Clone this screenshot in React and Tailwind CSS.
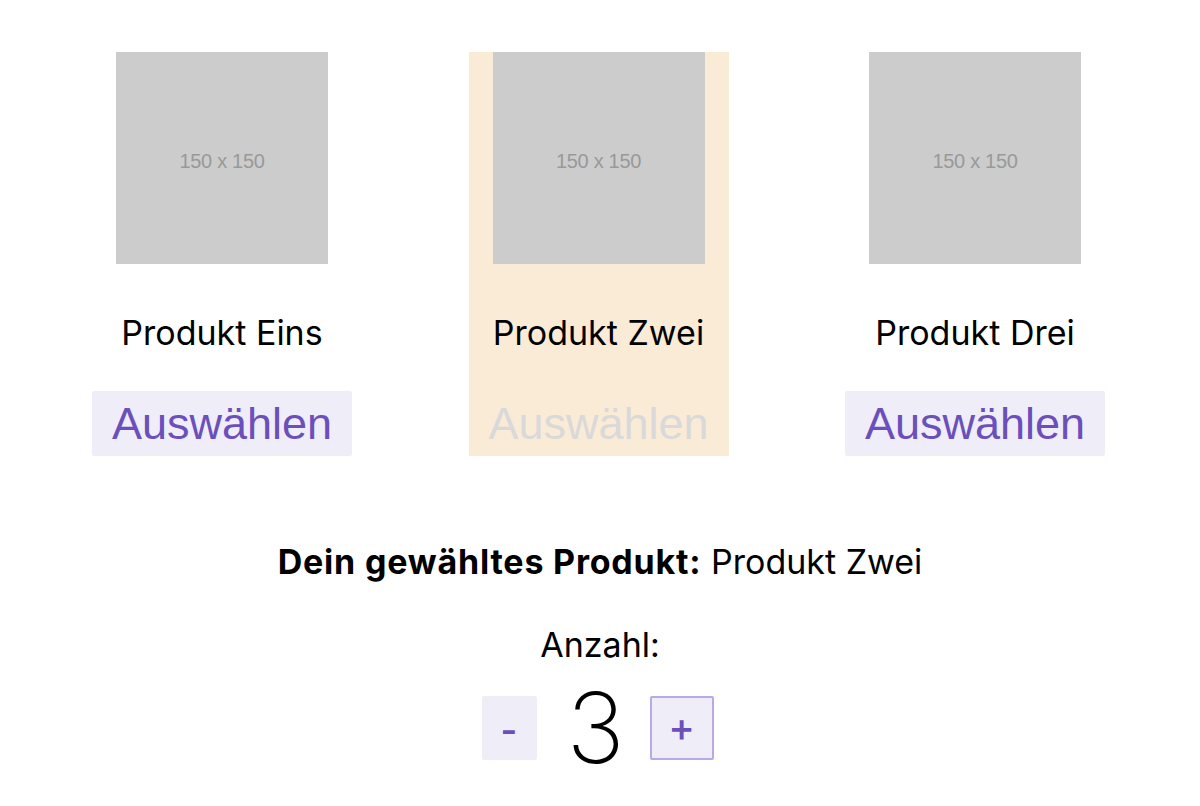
import React, { useState } from "react";

const products = ["Produkt Eins", "Produkt Zwei", "Produkt Drei"];

function Card({ name, selected, onSelect }) {
  return (
    <div
      className={
        "flex w-[260px] flex-col items-center " +
        (selected ? "bg-[#faebd7]" : "")
      }
    >
      <div className="flex h-[212px] w-[212px] items-center justify-center bg-[#cccccc] pt-[6px]">
        <span className="font-['Liberation_Sans',sans-serif] text-[20px] tracking-[-0.3px] text-[#999999]">
          150 x 150
        </span>
      </div>
      <div className="mt-[45px] h-[48px] font-['Inter',sans-serif] text-[34px] leading-[48px] text-black">
        {name}
      </div>
      <button
        onClick={onSelect}
        className={
          "mt-[34px] h-[65px] w-[260px] rounded-[2px] font-['Liberation_Sans',sans-serif] text-[45px] leading-[65px] " +
          (selected
            ? "bg-transparent text-[#d9d9d9]"
            : "bg-[#efedf8] text-[#6b4fbb]")
        }
      >
        Auswählen
      </button>
    </div>
  );
}

export default function App() {
  const [selected, setSelected] = useState(1);
  const [count, setCount] = useState(3);
  return (
    <div className="flex h-[806px] w-[1200px] flex-col items-center bg-white pt-[52px] font-['Inter',sans-serif]">
      <div className="flex gap-[116.5px] pr-[3px]">
        {products.map((p, i) => (
          <Card
            key={p}
            name={p}
            selected={i === selected}
            onSelect={() => setSelected(i)}
          />
        ))}
      </div>
      <div className="mt-[82px] text-[34px] leading-[48px] text-black">
        <span className="font-bold tracking-[0.8px]">Dein gewähltes Produkt:</span>{" "}
        {products[selected]}
      </div>
      <div className="mt-[35px] text-[34px] leading-[48px] text-black">
        Anzahl:
      </div>
      <div className="mt-[27px] flex items-center pr-[5px]">
        <button
          onClick={() => setCount((c) => Math.max(0, c - 1))}
          className="h-[64px] w-[55px] rounded-[2px] bg-[#efedf8] pt-[4px] text-[36px] font-semibold leading-none text-[#6b4fbb]"
        >
          -
        </button>
        <div className="mx-[30px] w-[53px] text-center text-[98px] font-extralight leading-[64px] text-black">
          {count}
        </div>
        <button
          onClick={() => setCount((c) => c + 1)}
          className="h-[64px] w-[64px] rounded-[2px] border-2 border-[#b9a9e5] bg-[#efedf8] pb-[2px] text-[40px] font-medium leading-none text-[#6b4fbb]"
        >
          +
        </button>
      </div>
    </div>
  );
}
